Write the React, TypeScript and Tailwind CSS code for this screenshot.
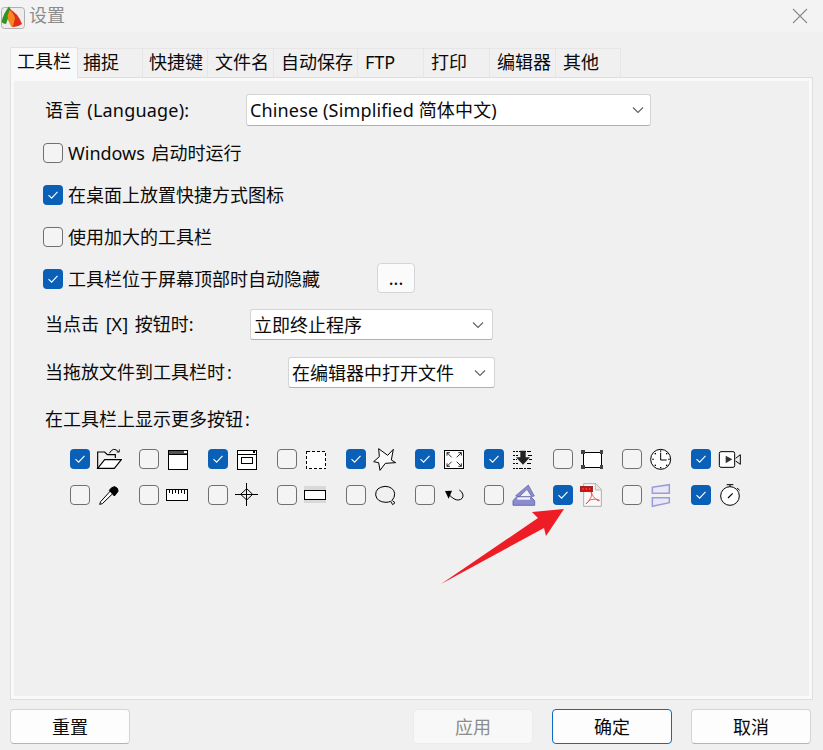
import React from "react";

const font = { fontFamily: '"Noto Sans","Noto Sans CJK SC",sans-serif' };

function Check() {
  return (
    <svg width="12" height="10" viewBox="0 0 12 10" fill="none" stroke="#fff" strokeWidth="1.1">
      <path d="M1.5 5.2 L4.6 8.2 L10.5 1.8" />
    </svg>
  );
}

function Box({ on }: { on?: boolean }) {
  return on ? (
    <span className="flex h-[20px] w-[20px] shrink-0 items-center justify-center rounded-[4px] bg-[#0a5fb6]">
      <Check />
    </span>
  ) : (
    <span className="block h-[20px] w-[20px] shrink-0 rounded-[4px] border-[1.5px] border-[#707070] bg-[#f4f4f4]" />
  );
}

function Chevron() {
  return (
    <svg width="12" height="8" viewBox="0 0 12 8" fill="none" stroke="#606060" strokeWidth="1.1">
      <path d="M1 1.5 L6 6.5 L11 1.5" />
    </svg>
  );
}

function Ic({ vx, vy, crisp, children }: { vx: number; vy: number; crisp?: boolean; children: React.ReactNode }) {
  return (
    <svg
      width="26"
      height="26"
      viewBox={`${vx} ${vy} 78 78`}
      fill="none"
      stroke="#000"
      strokeWidth="3"
      shapeRendering={crisp ? "crispEdges" : undefined}
      className="shrink-0"
    >
      {children}
    </svg>
  );
}

const Y1 = 18;
const Y2 = 126;

const row1: [boolean, React.ReactNode][] = [
  [true, <Ic vx={108} vy={Y1}>
    <path d="M113 85 V36 H134 L142 44 H166 V54" strokeWidth="3.4" />
    <path d="M113 85 L134 59 H184 L163 85 Z" fill="#fff" strokeWidth="3.4" />
    <path d="M148 40 Q160 18 176 36" />
    <path d="M170 36 H178 V28" strokeWidth="2.5" />
  </Ic>],
  [false, <Ic vx={315} vy={Y1} crisp>
    <rect x="326" y="31" width="57" height="56" fill="#fff" />
    <rect x="326" y="31" width="57" height="11" fill="#555" stroke="#000" />
    <rect x="373" y="33" width="7" height="7" fill="#fff" stroke="none" />
  </Ic>],
  [true, <Ic vx={522} vy={Y1} crisp>
    <rect x="532" y="31" width="57" height="56" fill="#fff" />
    <path d="M532 42 H589" />
    <rect x="579" y="33" width="7" height="7" fill="#000" stroke="none" />
    <rect x="544" y="51" width="34" height="20" />
  </Ic>],
  [false, <Ic vx={729} vy={Y1} crisp>
    <rect x="739.5" y="34.5" width="57" height="51" fill="#fff" strokeDasharray="9 6" />
  </Ic>],
  [true, <Ic vx={936} vy={Y1}>
    <path d="M956 26 L983 46 L1000 28 L994 60 L1007 68 L976 70 L960 91 L956 68 L941 65 L958 50 Z" strokeLinejoin="miter" strokeWidth="3" fill="#fafafa" />
  </Ic>],
  [true, <Ic vx={123} vy={Y1}>
    <rect x="134" y="31" width="57" height="55" fill="#fff" shapeRendering="crispEdges" />
    <path d="M141 38 L155 52 M184 38 L170 52 M141 79 L155 65 M184 79 L170 65" strokeWidth="2.5" />
    <path d="M141 47 V38 H150 M175 38 H184 V47 M141 70 V79 H150 M175 79 H184 V70" strokeWidth="2.5" />
  </Ic>],
  [true, <Ic vx={330} vy={Y1} crisp>
    <path d="M340 34 H397 M340 46 H355 M383 46 H397 M340 58 H352 M386 58 H397 M340 70 H358 M380 70 H397 M340 84 H397" strokeDasharray="6 2" />
    <path d="M361 32 H377 V52 H390 L369 74 L348 52 H361 Z" fill="#222" stroke="none" shapeRendering="auto" />
  </Ic>],
  [false, <Ic vx={537} vy={Y1} crisp>
    <rect x="549" y="36" width="54" height="46" fill="#fff" />
    <g fill="#444" stroke="none">
      <rect x="544" y="30" width="11" height="11" />
      <rect x="599" y="30" width="11" height="11" />
      <rect x="544" y="76" width="11" height="11" />
      <rect x="599" y="76" width="11" height="11" />
    </g>
  </Ic>],
  [false, <Ic vx={744} vy={Y1}>
    <circle cx="782" cy="58" r="30" fill="#fff" />
    <path d="M782 38 V60 H800" />
    <g fill="#000" stroke="none">
      <rect x="780" y="31" width="4" height="4" />
      <rect x="780" y="81" width="4" height="4" />
      <rect x="757" y="56" width="4" height="4" />
      <rect x="805" y="56" width="4" height="4" />
      <rect x="764" y="39" width="4" height="4" />
      <rect x="798" y="39" width="4" height="4" />
      <rect x="764" y="74" width="4" height="4" />
      <rect x="798" y="74" width="4" height="4" />
    </g>
  </Ic>],
  [true, <Ic vx={951} vy={Y1}>
    <rect x="958" y="35" width="46" height="47" rx="5" fill="#fff" />
    <path d="M977 47 L997 58 L977 70 Z" fill="#333" stroke="none" />
    <path d="M1007 55 L1021 44 V73 L1007 63" />
  </Ic>],
];

const row2: [boolean, React.ReactNode][] = [
  [false, <Ic vx={108} vy={Y2}>
    <path d="M122 185 L119 193 L127 191 L158 161 L151 153 Z" fill="#fff" />
    <path d="M148 151 L155 143 Q165 136 172 145 Q178 154 169 161 L163 168 Z" fill="#000" />
  </Ic>],
  [false, <Ic vx={315} vy={Y2} crisp>
    <rect x="320" y="149" width="62" height="32" fill="#fff" />
    <path d="M328 149 V158 M337 149 V163 M346 149 V158 M355 149 V163 M364 149 V158 M373 149 V163" />
  </Ic>],
  [false, <Ic vx={522} vy={Y2}>
    <path d="M525 163 H594 M560 129 V197" shapeRendering="crispEdges" />
    <path d="M560 146 L578 163 L560 180 L542 163 Z" />
  </Ic>],
  [false, <Ic vx={729} vy={Y2} crisp>
    <rect x="732" y="139" width="66" height="50" fill="#d9d9d9" stroke="none" />
    <rect x="734" y="151" width="62" height="27" fill="#fff" strokeWidth="3.5" />
  </Ic>],
  [false, <Ic vx={936} vy={Y2}>
    <path d="M995 183 Q1005 172 1004 160 Q1000 140 975 139 Q946 142 947 165 Q950 186 978 187 Q985 187 992 184 L998 194 L1005 188 L998 183" />
  </Ic>],
  [false, <Ic vx={123} vy={Y2}>
    <path d="M135 153 L156 152 L146 176 Z" fill="#000" stroke="none" />
    <path d="M146 163 Q163 181 175 180 Q190 178 189 165 Q187 155 178 150" />
  </Ic>],
  [false, <Ic vx={330} vy={Y2}>
    <path d="M347 167 L385 135 L403 168 L395 170 L381 148 L358 170 Z" fill="#8b8bd0" stroke="#5c5ca8" strokeWidth="2" />
    <path d="M350 170 H392 L404 182 V196 H339 V182 Z" fill="#8b8bd0" stroke="#5c5ca8" strokeWidth="2.5" />
    <rect x="352" y="172" width="38" height="7" fill="#f4f4f4" stroke="none" />
  </Ic>],
  [true, <Ic vx={537} vy={Y2}>
    <path d="M551 131 H588 L604 149 V199 H551 Z" fill="#fafafa" stroke="#a0a0a0" strokeWidth="2.5" />
    <path d="M586 131 V150 H604" fill="#e6e6e6" stroke="#a0a0a0" strokeWidth="2" />
    <rect x="541" y="139" width="37" height="16" fill="#cf1010" stroke="#8e0d0d" strokeWidth="2" />
    <path d="M547 147 H551 M557 147 H561 M567 147 H571" stroke="#f4a0a0" strokeWidth="2.5" />
    <path d="M573 156 Q579 172 590 180 Q600 186 598 180 Q590 175 572 179 Q562 186 558 192 Q566 185 573 172 Q577 160 573 156 Z" stroke="#f0403c" strokeWidth="2.5" />
  </Ic>],
  [false, <Ic vx={744} vy={Y2}>
    <path d="M757 142 L808 134 V160 H757 Z" fill="#e8e8f6" stroke="#9c9cd8" strokeWidth="4.5" />
    <path d="M757 173 H808 V188 L757 199 Z" fill="#e8e8f6" stroke="#9c9cd8" strokeWidth="4.5" />
  </Ic>],
  [true, <Ic vx={951} vy={Y2}>
    <circle cx="990" cy="168" r="28" fill="#fff" strokeWidth="3" />
    <path d="M980 134 H1000 M990 134 V140" />
    <path d="M1011 144 L1019 151" strokeWidth="3" />
    <path d="M984 174 L998 160" strokeWidth="3.5" />
  </Ic>],
];

const tabs: [string, string, string][] = [
  ["捕捉", "w-[65px]", "pl-[5px]"],
  ["快捷键", "w-[65px]", "pl-[6px]"],
  ["文件名", "w-[66px]", "pl-[7px]"],
  ["自动保存", "w-[84px]", "pl-[7px]"],
  ["FTP", "w-[66px]", "pl-[7px]"],
  ["打印", "w-[66px]", "pl-[7px]"],
  ["编辑器", "w-[66px]", "pl-[7px]"],
  ["其他", "w-[65px]", "pl-[7px]"],
];

function Select({ w, text, chev, track }: { w: string; text: string; chev: string; track?: string }) {
  return (
    <div className={`flex h-full items-center justify-between rounded-[3px] border border-[#d4d4d4] border-b-[#b0b0b0] bg-white pl-[3px] ${chev} ${w}`}>
      <span className={track}>{text}</span>
      <Chevron />
    </div>
  );
}

function Opt({ on, text, cls, children }: { on?: boolean; text: string; cls?: string; children?: React.ReactNode }) {
  return (
    <div className="flex h-[42px] items-center">
      <Box on={on} />
      <span className={`ml-[5px] pb-px ${cls ?? ""}`}>{text}</span>
      {children}
    </div>
  );
}

function Btn({ text, cls }: { text: string; cls: string }) {
  return (
    <div className={`flex h-[35px] w-[120px] items-center justify-center rounded-[4px] border ${cls}`}>{text}</div>
  );
}

export default function App() {
  return (
    <div style={font} className="relative h-[750px] w-[823px] overflow-hidden bg-[#f0f0f0] text-[18px] leading-[24px] text-[#0a0a0a]">
      <div className="flex h-[32px] items-center justify-between bg-[#f3f3f3] pr-[15px]">
        <div className="flex items-center">
          <svg width="26" height="26" viewBox="0 0 26 26" className="ml-px mt-[2px]">
            <rect x="0.5" y="3.5" width="23" height="21" rx="3" fill="#ededed" stroke="#b0b0b0" />
            <path d="M8 2.5 L10 6 L5 20 Q2.5 20 0.5 18 Q2 10 8 2.5 Z" fill="#2f9426" />
            <path d="M8.5 5 Q17 9 21 20 Q17 23 11 23 L6.5 14 Z" fill="#e22d18" />
            <path d="M8.5 6 Q12 8 14 14 L12 22 L11 23 Q7 18 6.5 12 Z" fill="#f48a1e" />
          </svg>
          <span className="ml-[2px] pb-[2px] text-[#8c8c8c]">设置</span>
        </div>
        <svg width="16" height="16" viewBox="0 0 16 16" stroke="#8a8a8a" strokeWidth="1.1" fill="none">
          <path d="M1 1 L15 15 M15 1 L1 15" />
        </svg>
      </div>

      <div className="flex h-[45px] items-end pl-[10px] pt-[14px]">
        <div className="relative z-10 -mb-px flex h-[31px] w-[68px] items-center justify-center rounded-t-[2px] border border-b-0 border-[#e2e2e2] bg-[#f9f9f9] pb-[5px]">
          工具栏
        </div>
        {tabs.map(([t, w, p]) => (
          <div key={t} className={`flex h-[29px] items-center border-r border-t border-[#e6e6e6] pb-[2px] ${w} ${p}`}>
            {t}
          </div>
        ))}
      </div>

      <div className="ml-[10px] h-[623px] w-[803px] border border-[#dedede] bg-[#f0f0f0] pl-[32px] pt-[16px] shadow-[inset_0_0_0_3px_#f9f9f9]">
        <div className="flex h-[32px] items-center">
          <span className="ml-[2px] w-[201px] tracking-[0.2px] [word-spacing:1px]">语言 (Language):</span>
          <Select w="w-[405px]" text="Chinese (Simplified 简体中文)" chev="pr-[6px]" track="tracking-[0.15px]" />
        </div>
        <div className="mt-[6px]">
          <Opt text="Windows 启动时运行" cls="[word-spacing:2px]" />
          <Opt on text="在桌面上放置快捷方式图标" />
          <Opt text="使用加大的工具栏" />
          <Opt on text="工具栏位于屏幕顶部时自动隐藏">
            <div className="mb-[2px] ml-[57px] flex h-[30px] w-[38px] items-center justify-center rounded-[4px] border border-[#d4d4d4] bg-[#fbfbfb]">...</div>
          </Opt>
        </div>
        <div className="mt-[9px] flex h-[31px] items-center">
          <span className="ml-[2px] w-[205px] pb-px [word-spacing:2px]">当点击 [X] 按钮时:</span>
          <Select w="w-[243px]" text="立即终止程序" chev="pr-[8px]" />
        </div>
        <div className="mt-[17px] flex h-[31px] items-center">
          <span className="ml-[2px] w-[243px] pb-px">当拖放文件到工具栏时<span className="ml-[2px]">:</span></span>
          <Select w="w-[207px]" text="在编辑器中打开文件" chev="pr-[8px]" />
        </div>
        <div className="ml-[2px] mt-[19px] h-[24px]">在工具栏上显示更多按钮<span className="ml-[2px]">:</span></div>

        <div className="ml-[27px] mt-[15px] flex flex-col gap-[10px]">
          {[row1, row2].map((row, i) => (
            <div key={i} className="flex h-[26px]">
              {row.map(([on, icon], j) => (
                <div key={j} className="flex w-[69px] items-center gap-[6px]">
                  <Box on={on} />
                  {icon}
                </div>
              ))}
            </div>
          ))}
        </div>
      </div>

      <div className="mt-[9px] flex pl-[10px]">
        <Btn text="重置" cls="border-[#d4d4d4] border-b-[#b4b4b4] bg-[#fdfdfd]" />
        <div className="ml-[283px] flex gap-[19px]">
          <Btn text="应用" cls="border-[#ececec] bg-[#f8f8f8] text-[#8c8c8c]" />
          <Btn text="确定" cls="border-[#0a6cc4] bg-[#fdfdfd]" />
          <Btn text="取消" cls="border-[#d4d4d4] border-b-[#b4b4b4] bg-[#fdfdfd]" />
        </div>
      </div>

      <svg width="823" height="750" className="pointer-events-none absolute left-0 top-0">
        <path d="M564 509 L532 512 L538 518 L441 584 L544 528 L546 536 Z" fill="#ee1c25" />
      </svg>
    </div>
  );
}
